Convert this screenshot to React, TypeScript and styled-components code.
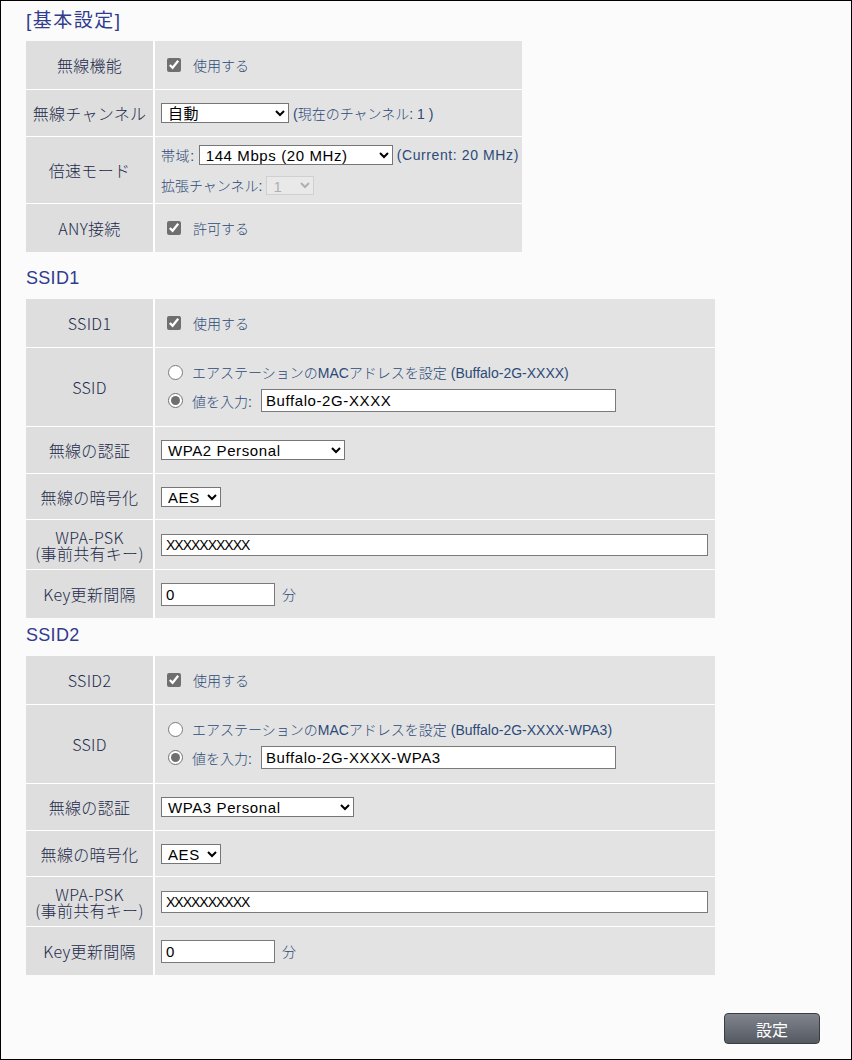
import styled, { createGlobalStyle } from 'styled-components'

const GlobalStyle = createGlobalStyle`
    html, body {
        margin: 0;
        padding: 0;
        background: #fbfbfb;
    }
`

const labelColor = '#1d2a4b'
const valueColor = '#2c4a78'
const sans = '"Liberation Sans", "Noto Sans CJK JP", sans-serif'
const jp = '"Noto Sans CJK JP", sans-serif'

type Field = { label: string, height: number, content: React.ReactNode }

function CheckField({ text }: { text: string }) {
    return (
        <CheckLabel>
            <CheckBox type="checkbox" defaultChecked />
            <span>{text}</span>
        </CheckLabel>
    )
}

function SsidChoice({ mac, value }: { mac: string, value: string }) {
    return (
        <Stack $gap={7}>
            <RadioLine>
                <Radio type="radio" name={mac} />
                <span>エアステーションのMACアドレスを設定 ({mac})</span>
            </RadioLine>
            <RadioLine>
                <Radio type="radio" name={mac} defaultChecked />
                <span>値を入力:</span>
                <TextInput $width={355} defaultValue={value} />
            </RadioLine>
        </Stack>
    )
}

function ssidFields(n: number, mac: string, auth: string, authWidth: number): Field[] {
    return [
        { label: `SSID${n}`, height: 49, content: <CheckField text="使用する" /> },
        { label: 'SSID', height: 79, content: <SsidChoice mac={mac} value={mac} /> },
        {
            label: '無線の認証',
            height: 47,
            content: (
                <Select $width={authWidth} defaultValue={auth}>
                    <option>{auth}</option>
                </Select>
            )
        },
        {
            label: '無線の暗号化',
            height: 46,
            content: (
                <Select $width={60} defaultValue="AES">
                    <option>AES</option>
                </Select>
            )
        },
        {
            label: 'WPA-PSK\n(事前共有キー)',
            height: 50,
            content: <TextInput $width={547} $height={22} $mono defaultValue="XXXXXXXXXX" />
        },
        {
            label: 'Key更新間隔',
            height: 48,
            content: (
                <Line>
                    <TextInput $width={114} defaultValue="0" />
                    <Unit>分</Unit>
                </Line>
            )
        }
    ]
}

function basicFields(): Field[] {
    return [
        { label: '無線機能', height: 49, content: <CheckField text="使用する" /> },
        {
            label: '無線チャンネル',
            height: 47,
            content: (
                <Line>
                    <Select $width={128} defaultValue="自動">
                        <option>自動</option>
                    </Select>
                    <Note>(現在のチャンネル: 1 )</Note>
                </Line>
            )
        },
        {
            label: '倍速モード',
            height: 67,
            content: (
                <Stack $gap={10}>
                    <Line>
                        <Note $spaced>帯域:</Note>
                        <Select $width={194} defaultValue="144">
                            <option value="144">144 Mbps (20 MHz)</option>
                        </Select>
                        <Note $spaced>(Current: 20 MHz)</Note>
                    </Line>
                    <Line>
                        <Note>拡張チャンネル:</Note>
                        <Select $width={48} $height={19} disabled defaultValue="1">
                            <option>1</option>
                        </Select>
                    </Line>
                </Stack>
            )
        },
        { label: 'ANY接続', height: 48, content: <CheckField text="許可する" /> }
    ]
}

function SettingsTable({ fields, width }: { fields: Field[], width: number }) {
    return (
        <Table $width={width}>
            <tbody>
                {fields.map((f, i) => (
                    <Row key={i} $height={f.height} $last={i === fields.length - 1}>
                        <LabelCell>{f.label}</LabelCell>
                        <ValueCell>{f.content}</ValueCell>
                    </Row>
                ))}
            </tbody>
        </Table>
    )
}

export default function App() {
    return (
        <Page>
            <GlobalStyle />
            <Heading $top={9} $bottom={9} $wide>[基本設定]</Heading>
            <SettingsTable fields={basicFields()} width={496} />
            <Heading $top={15} $bottom={10}>SSID1</Heading>
            <SettingsTable fields={ssidFields(1, 'Buffalo-2G-XXXX', 'WPA2 Personal', 184)} width={689} />
            <Heading $top={6} $bottom={10}>SSID2</Heading>
            <SettingsTable fields={ssidFields(2, 'Buffalo-2G-XXXX-WPA3', 'WPA3 Personal', 193)} width={689} />
            <Footer>
                <SubmitButton type="button">設定</SubmitButton>
            </Footer>
        </Page>
    )
}

const Page = styled.div`
    box-sizing: border-box;
    height: 1060px;
    border: 1px solid #000;
    background: #fbfbfb;
    padding-left: 25px;
    display: flex;
    flex-direction: column;
    align-items: flex-start;
    font-family: ${sans};
`

const Heading = styled.h2<{ $top: number, $bottom: number, $wide?: boolean }>`
    margin: ${({ $top, $bottom }) => `${$top}px 0 ${$bottom}px`};
    font-size: ${({ $wide }) => ($wide ? '19px' : '18px')};
    line-height: 22px;
    font-weight: normal;
    letter-spacing: ${({ $wide }) => ($wide ? '1.5px' : '0.3px')};
    color: #323c8e;
    font-family: ${sans};
`

const Table = styled.table<{ $width: number }>`
    width: ${({ $width }) => $width}px;
    border-collapse: separate;
    border-spacing: 0;
    table-layout: fixed;
`

const Row = styled.tr<{ $height: number, $last: boolean }>`
    height: ${({ $height }) => $height}px;

    & > td {
        border-bottom: ${({ $last }) => ($last ? 'none' : '1px solid #fff')};
    }
`

const LabelCell = styled.td`
    box-sizing: border-box;
    width: 128px;
    padding: 0;
    background: #dedede;
    border-right: 1px solid #fff;
    color: ${labelColor};
    font-family: ${jp};
    font-size: 16px;
    font-weight: 300;
    line-height: 16px;
    letter-spacing: 0.3px;
    text-align: center;
    vertical-align: middle;
    white-space: pre-line;
`

const ValueCell = styled.td`
    padding: 0 0 0 6px;
    background: #e3e3e3;
    border-left: 1px solid #fff;
    color: ${valueColor};
    font-size: 14px;
    vertical-align: middle;
`

const Line = styled.div`
    display: flex;
    align-items: center;
    gap: 4px;
`

const Stack = styled.div<{ $gap: number }>`
    display: flex;
    flex-direction: column;
    gap: ${({ $gap }) => $gap}px;
`

const CheckLabel = styled.label`
    display: flex;
    align-items: center;
    gap: 12px;
    padding-left: 6px;
    font-family: ${jp};
    font-size: 14px;
    font-weight: 300;
    color: ${valueColor};
`

const CheckBox = styled.input`
    margin: 0;
    width: 14px;
    height: 14px;
    accent-color: #6f6f6f;
`

const RadioLine = styled.label`
    display: flex;
    align-items: center;
    gap: 9px;
    padding-left: 7px;
    font-size: 14px;
    font-weight: 300;
    color: ${valueColor};
`

const Radio = styled.input`
    margin: 0;
    width: 15px;
    height: 15px;
    accent-color: #6f6f6f;
`

const Select = styled.select<{ $width: number, $height?: number }>`
    box-sizing: border-box;
    width: ${({ $width }) => $width}px;
    height: ${({ $height = 20 }) => $height}px;
    padding: 0 2px;
    border: 1px solid #767676;
    border-radius: 0;
    background: #fff;
    color: #000;
    font-family: ${sans};
    font-size: 15px;
    letter-spacing: 0.6px;

    &:disabled {
        border-color: #c8c8c8;
        color: #9a9a9a;
        background: #ececec;
    }
`

const TextInput = styled.input<{ $width: number, $height?: number, $mono?: boolean }>`
    box-sizing: border-box;
    width: ${({ $width }) => $width}px;
    height: ${({ $height = 23 }) => $height}px;
    margin: 0;
    padding: 0 4px;
    border: 1px solid #7a7a7a;
    border-radius: 0;
    background: #fff;
    color: #000;
    font-family: ${sans};
    font-size: ${({ $mono }) => ($mono ? '14px' : '15px')};
    letter-spacing: ${({ $mono }) => ($mono ? '-1px' : '0.6px')};
`

const Note = styled.span<{ $spaced?: boolean }>`
    font-size: 14px;
    font-weight: 300;
    letter-spacing: ${({ $spaced }) => ($spaced ? '0.6px' : '0')};
    color: ${valueColor};
`

const Unit = styled.span`
    margin-left: 3px;
    font-size: 14px;
    font-weight: 300;
    color: ${valueColor};
`

const Footer = styled.div`
    margin-top: auto;
    align-self: stretch;
    display: flex;
    justify-content: flex-end;
    padding: 0 31px 15px 0;
`

const SubmitButton = styled.button`
    width: 96px;
    height: 31px;
    border: 1px solid #3a3d42;
    border-radius: 4px;
    background: linear-gradient(#80858d, #555a62);
    color: #fff;
    font-family: ${jp};
    font-size: 16px;
    cursor: pointer;
`
